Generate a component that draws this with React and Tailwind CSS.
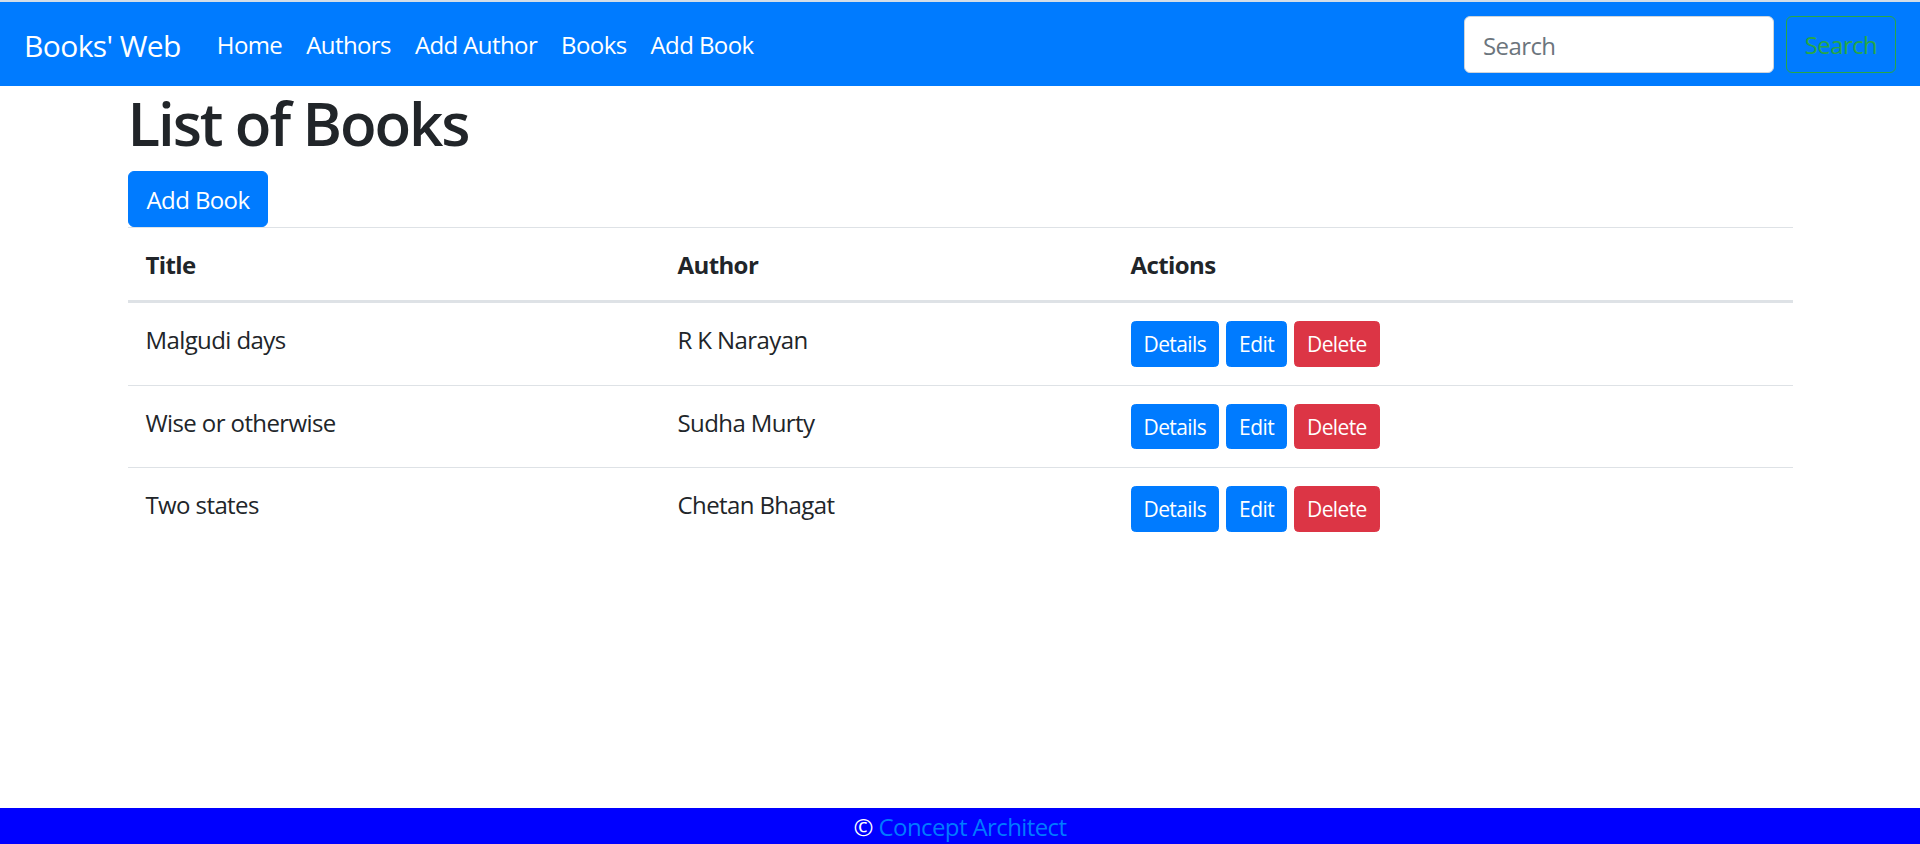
import React from 'react';

const books = [
  { title: 'Malgudi days', author: 'R K Narayan' },
  { title: 'Wise or otherwise', author: 'Sudha Murty' },
  { title: 'Two states', author: 'Chetan Bhagat' },
];

const navLinks = ['Home', 'Authors', 'Add Author', 'Books', 'Add Book'];

const App = () => {
  return (
    <div className="min-h-screen flex flex-col bg-white text-[#212529] font-['Open_Sans',sans-serif] text-[24px] leading-[36px] tracking-[-0.025em]">
      <div className="h-[2px] bg-[#d3dde8]" />
      <nav className="bg-[#007bff] h-[84px] px-[24px] flex items-center">
        <a className="text-white text-[30px] leading-[45px] mr-[24px] pt-[2px]">Books' Web</a>
        <ul className="flex">
          {navLinks.map((l) => (
            <li key={l}>
              <a className="block text-white px-[12px] pt-[13px] pb-[11px]">{l}</a>
            </li>
          ))}
        </ul>
        <form className="ml-auto flex items-center">
          <input
            className="w-[310px] h-[57px] px-[18px] pt-[2px] rounded-[6px] bg-white border border-[#ced4da] text-[24px] placeholder:text-[#6c757d] outline-none mr-[12px] tracking-[-0.025em]"
            placeholder="Search"
          />
          <button type="button" className="h-[57px] w-[110px] pt-[2px] rounded-[6px] border border-[#28a745] text-[#28a745] text-[24px]">
            Search
          </button>
        </form>
      </nav>

      <div className="w-[1710px] mx-auto px-[22.5px]">
        <h1 className="text-[60px] leading-[72px] font-semibold mb-[12px] tracking-[-0.035em] pt-[1px]">List of Books</h1>
        <button className="bg-[#007bff] text-white rounded-[6px] px-[18px] pt-[10px] pb-[8px] leading-[36px] border border-[#007bff]">
          Add Book
        </button>
        <table className="w-full border-collapse mb-[24px]">
          <thead>
            <tr>
              <th className="w-[532px] text-left font-bold px-[18px] pt-[19px] pb-[17px] border-t border-[#dee2e6] border-b-[3px] border-b-[#dee2e6]">Title</th>
              <th className="w-[453px] text-left font-bold px-[18px] pt-[19px] pb-[17px] border-t border-[#dee2e6] border-b-[3px] border-b-[#dee2e6]">Author</th>
              <th className="text-left font-bold px-[18px] pt-[19px] pb-[17px] border-t border-[#dee2e6] border-b-[3px] border-b-[#dee2e6]">Actions</th>
            </tr>
          </thead>
          <tbody>
            {books.map((b, i) => (
              <tr key={b.title}>
                <td className={`px-[18px] pt-[19px] pb-[17px] align-top ${i > 0 ? 'border-t border-[#dee2e6]' : ''}`}>{b.title}</td>
                <td className={`px-[18px] pt-[19px] pb-[17px] align-top ${i > 0 ? 'border-t border-[#dee2e6]' : ''}`}>{b.author}</td>
                <td className={`p-[18px] align-top ${i > 0 ? 'border-t border-[#dee2e6]' : ''}`}>
                  <div className="flex gap-[7px]">
                    <a className="bg-[#007bff] text-white text-[21px] leading-[31.5px] px-[12px] pt-[7px] pb-[5px] rounded-[4.5px] border border-[#007bff]">Details</a>
                    <a className="bg-[#007bff] text-white text-[21px] leading-[31.5px] px-[12px] pt-[7px] pb-[5px] rounded-[4.5px] border border-[#007bff]">Edit</a>
                    <a className="bg-[#dc3545] text-white text-[21px] leading-[31.5px] px-[12px] pt-[7px] pb-[5px] rounded-[4.5px] border border-[#dc3545]">Delete</a>
                  </div>
                </td>
              </tr>
            ))}
          </tbody>
        </table>
      </div>

      <footer className="mt-auto bg-[#0000ff] h-[36px] text-center text-white pt-[1px]">
        © <a className="text-[#007bff]">Concept Architect</a>
      </footer>
    </div>
  );
};

export default App;
